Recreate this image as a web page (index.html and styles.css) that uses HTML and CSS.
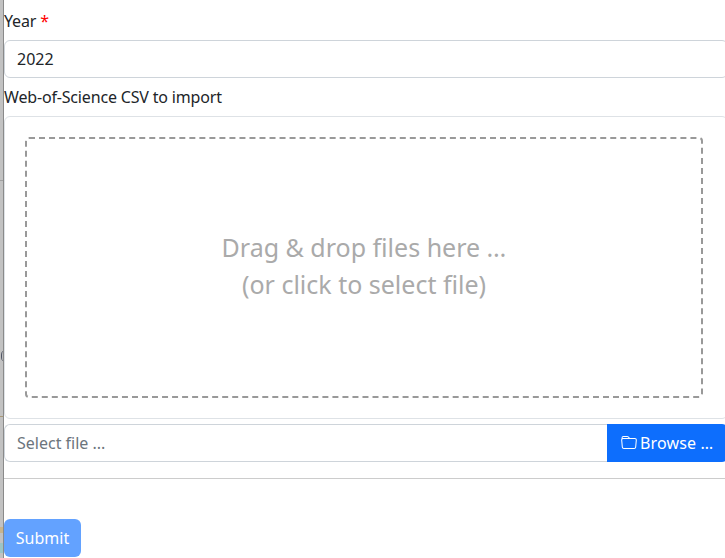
FILE: index.html
```html
<!DOCTYPE html>
<html>
  <head>
    <meta charset="UTF-8">
    <title>Import</title>
    <link rel="stylesheet" href="styles.css">
  </head>
  <body>
    <div class="backdrop">
      <span class="backdrop-line line-top"></span>
      <span class="backdrop-arc"></span>
      <span class="backdrop-line line-bottom"></span>
      <span class="backdrop-speck speck-tan"></span>
      <span class="backdrop-speck speck-teal"></span>
    </div>
    <form class="form">
      <div class="field">
        <label class="field-label">Year <span class="required">*</span></label>
        <input class="form-control" type="text" value="2022">
      </div>
      <div class="field">
        <label class="field-label">Web-of-Science CSV to import</label>
        <div class="file-preview">
          <div class="drop-zone">
            <div class="drop-text">Drag &amp; drop files here &hellip;<br>(or click to select file)</div>
          </div>
        </div>
        <div class="input-group">
          <div class="file-caption">Select file ...</div>
          <button class="browse-btn" type="button">
            <svg class="folder-icon" viewBox="0 0 16 16" width="16" height="16" fill="currentColor">
              <path d="M.54 3.87.5 3a2 2 0 0 1 2-2h3.672a2 2 0 0 1 1.414.586l.828.828A2 2 0 0 0 9.828 3h3.982a2 2 0 0 1 1.992 2.181l-.637 7A2 2 0 0 1 13.174 14H2.826a2 2 0 0 1-1.991-1.819l-.637-7a2 2 0 0 1 .342-1.31zM2.19 4a1 1 0 0 0-.996 1.09l.637 7a1 1 0 0 0 .995.91h10.348a1 1 0 0 0 .995-.91l.637-7A1 1 0 0 0 13.81 4H2.19zm4.69-1.707A1 1 0 0 0 6.172 2H2.5a1 1 0 0 0-1 .981l.006.139C1.72 3.042 1.95 3 2.19 3h5.396l-.707-.707z"/>
            </svg>
            Browse &hellip;
          </button>
        </div>
      </div>
      <hr class="divider">
      <button class="submit-btn" type="button">Submit</button>
    </form>
  </body>
</html>
```

FILE: styles.css
```css
* {
  box-sizing: border-box;
}

html,
body {
  height: 558px;
  margin: 0;
  overflow: hidden;
}

body {
  display: flex;
  font-family: "Noto Sans", sans-serif;
  font-size: 16px;
  line-height: 24px;
  color: #212529;
  background: #ffffff;
}

.backdrop {
  position: relative;
  flex: 0 0 4px;
  background: #c2c2c2;
  border-right: 1px solid #8a8a8a;
  overflow: hidden;
}

.backdrop-line {
  position: absolute;
  left: 0;
  right: 0;
  height: 1px;
  background: #a0a0a0;
}

.line-top {
  top: 180px;
}

.line-bottom {
  top: 416px;
  background: #a89878;
}

.backdrop-arc {
  position: absolute;
  left: 1px;
  top: 351px;
  width: 5px;
  height: 10px;
  border-left: 1px solid #4a5060;
  border-radius: 50%;
}

.backdrop-speck {
  position: absolute;
  left: 0;
  right: 0;
}

.speck-tan {
  top: 527px;
  height: 6px;
  background: #c8b48c;
}

.speck-teal {
  top: 543px;
  height: 10px;
  background: #9cc4c4;
}

.form {
  flex: 0 0 724px;
  padding-top: 9px;
}

.field-label {
  display: block;
  height: 31px;
  letter-spacing: -0.17px;
}

.required {
  color: #ff0000;
}

.form-control {
  display: block;
  width: 100%;
  height: 38px;
  padding: 6px 12px;
  border: 1px solid #ced4da;
  border-radius: 6px;
  font: inherit;
  color: #212529;
  margin-bottom: 7px;
}

.file-preview {
  height: 303px;
  padding: 20px 24px 20px 20px;
  border: 1px solid #dee2e6;
  border-radius: 6px;
  margin-bottom: 5px;
}

.drop-zone {
  display: flex;
  height: 100%;
  padding-bottom: 3px;
  align-items: center;
  justify-content: center;
  border: 2px dashed #999999;
  border-radius: 4px;
}

.drop-text {
  font-size: 25px;
  line-height: 37px;
  text-align: center;
  color: #aaaaaa;
}

.input-group {
  display: flex;
  height: 38px;
}

.file-caption {
  flex: 1;
  padding: 6px 12px;
  border: 1px solid #ced4da;
  border-right: 0;
  border-radius: 6px 0 0 6px;
  color: #6c757d;
}

.browse-btn {
  display: flex;
  align-items: center;
  gap: 3px;
  width: 121px;
  padding: 0 0 0 14px;
  border: 0;
  border-radius: 0 6px 6px 0;
  background: #0d6efd;
  color: #ffffff;
  font: inherit;
  letter-spacing: 0.15px;
  white-space: nowrap;
}

.divider {
  height: 1px;
  margin: 16px 0 40px;
  border: 0;
  background: #cccccc;
}

.submit-btn {
  display: block;
  width: 77px;
  height: 38px;
  padding: 0;
  border: 0;
  border-radius: 6px;
  background: #63a2ff;
  color: #ffffff;
  font: inherit;
}
```
